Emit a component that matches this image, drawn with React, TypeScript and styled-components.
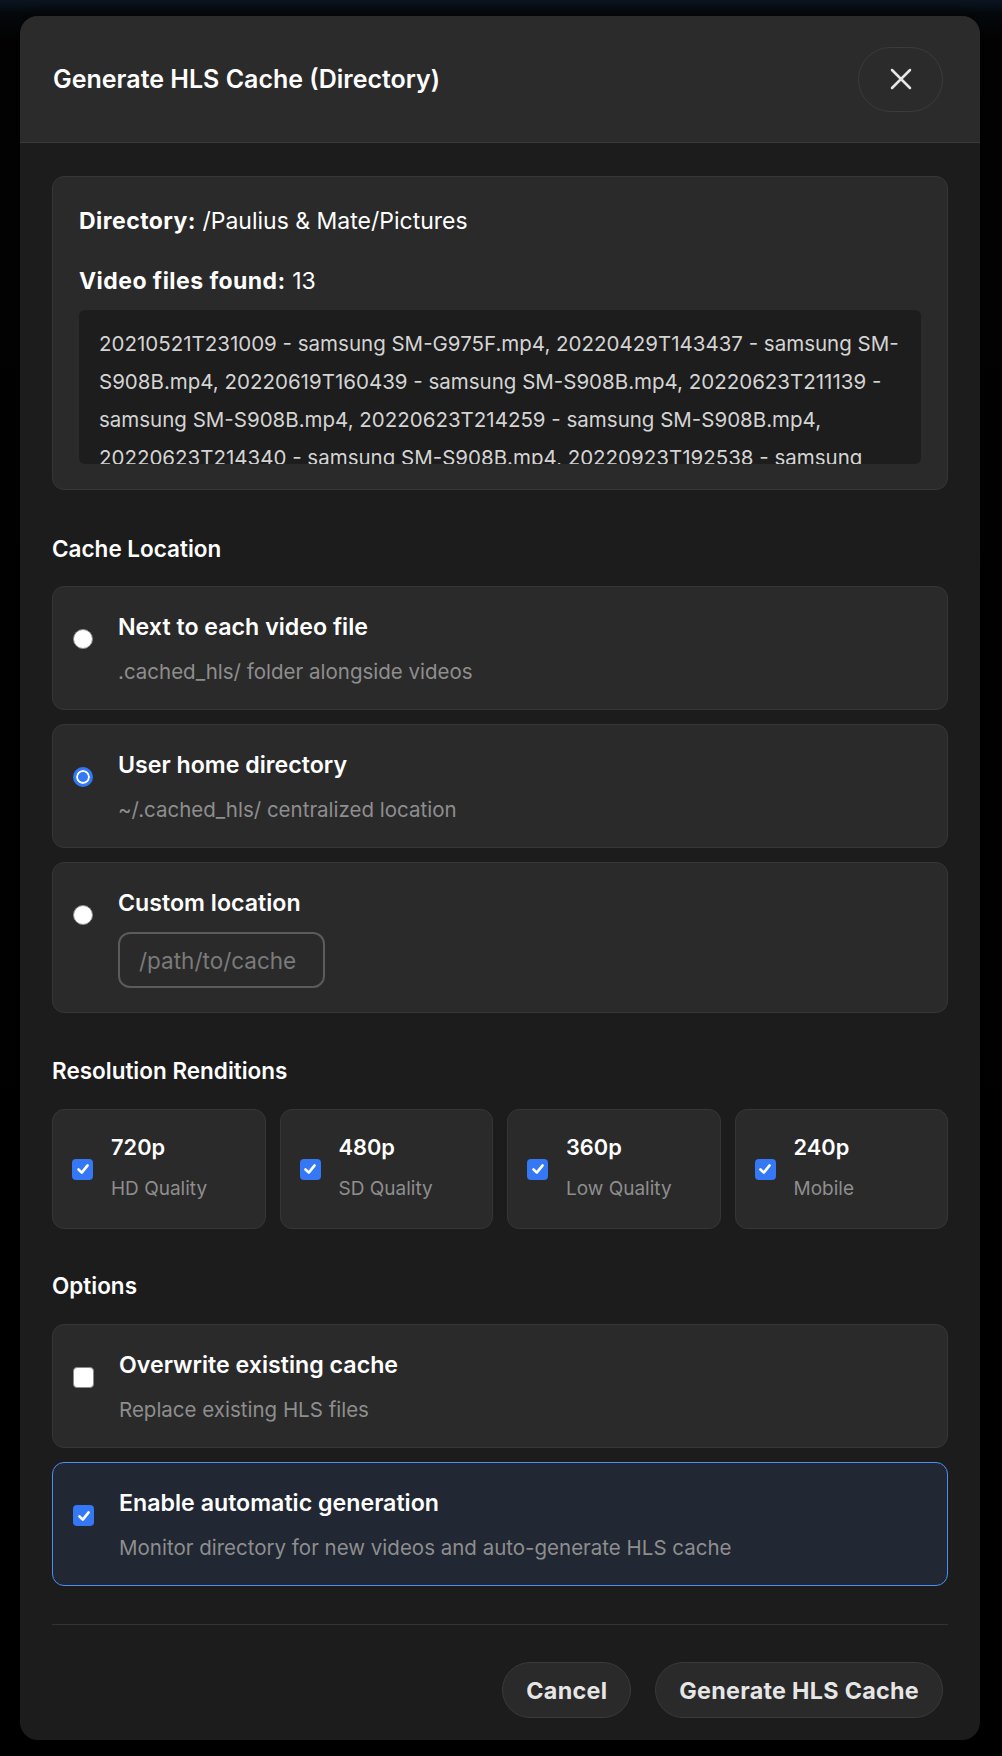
import React from "react";
import styled, { createGlobalStyle, css } from "styled-components";

const GlobalStyle = createGlobalStyle`
  html, body { margin: 0; padding: 0; }
  body {
    background: linear-gradient(180deg, #0c1622 0px, #05080c 14px, #030303 40px, #000 100%);
    font-family: Inter, "Noto Sans", "Liberation Sans", sans-serif;
    color: #fff;
    -webkit-font-smoothing: antialiased;
  }
  * { box-sizing: border-box; }
`;

const Page = styled.div`
  width: 1002px;
  min-height: 1756px;
  padding: 16px 22px 17px 20px;
`;

const Modal = styled.div`
  width: 960px;
  background: #1c1c1c;
  border-radius: 18px;
  overflow: hidden;
  box-shadow: 0 10px 40px rgba(0, 0, 0, 0.6);
`;

const Header = styled.div`
  height: 127px;
  display: flex;
  align-items: center;
  justify-content: space-between;
  padding: 0 37px 0 33px;
  background: #2b2b2b;
  border-bottom: 1px solid #3a3a3a;
`;

const Title = styled.h2`
  margin: 0;
  font-size: 25px;
  line-height: 30px;
  font-weight: 600;
  color: #fff;
`;

const CloseButton = styled.button`
  width: 85px;
  height: 65px;
  border-radius: 33px;
  border: 1px solid #3b3b3b;
  background: transparent;
  display: flex;
  align-items: center;
  justify-content: center;
  padding: 0;
  color: #e6e6e6;
`;

const Body = styled.div`
  padding: 33px 32px 0;
`;

const InfoCard = styled.div`
  background: #2a2a2a;
  border: 1px solid #363636;
  border-radius: 12px;
  padding: 29px 26px 25px;
`;

const InfoLine = styled.p<{ $gap?: number }>`
  margin: ${(p) => p.$gap ?? 0}px 0 0;
  font-size: 23px;
  line-height: 30px;
  color: #fff;
  b { font-weight: 700; letter-spacing: 0.45px; }
`;

const FileList = styled.div`
  margin-top: 14px;
  height: 154px;
  overflow: hidden;
  background: #1d1d1d;
  border-radius: 6px;
  padding: 15px 20px 0;
  font-size: 20.5px;
  line-height: 38px;
  color: #d4d4d4;
  white-space: nowrap;
`;

const SectionTitle = styled.h3<{ $top: number }>`
  margin: ${(p) => p.$top}px 0 0;
  font-size: 22.5px;
  line-height: 24px;
  font-weight: 600;
  color: #fff;
`;

const Stack = styled.div<{ $top: number }>`
  margin-top: ${(p) => p.$top}px;
  display: flex;
  flex-direction: column;
  gap: 14px;
`;

const OptionCard = styled.label<{ $active?: boolean }>`
  display: flex;
  align-items: flex-start;
  gap: 25px;
  padding: 25px 20px 24px;
  border-radius: 12px;
  background: #2a2a2a;
  border: 1px solid #363636;
  ${(p) =>
    p.$active &&
    css`
      background: #212733;
      border-color: #4b8ef5;
    `}
`;

const CardText = styled.div`
  display: flex;
  flex-direction: column;
  align-items: flex-start;
`;

const CardTitle = styled.div`
  font-size: 23.2px;
  line-height: 30px;
  font-weight: 600;
  color: #fff;
`;

const CardSub = styled.div`
  margin-top: 16px;
  font-size: 20.5px;
  line-height: 27px;
  color: #8e8e8e;
`;

const RadioDot = styled.span<{ $checked?: boolean }>`
  flex: none;
  width: 20px;
  height: 20px;
  margin-top: 17px;
  border-radius: 50%;
  background: #fff;
  border: 1px solid #8a8a8a;
  ${(p) =>
    p.$checked &&
    css`
      background: #3478f6;
      border: 3px solid #3478f6;
      box-shadow: inset 0 0 0 2px #fff;
    `}
`;

const Box = styled.span<{ $checked?: boolean; $mt?: number }>`
  flex: none;
  width: 21px;
  height: 21px;
  margin-top: ${(p) => p.$mt ?? 0}px;
  border-radius: 4px;
  display: flex;
  align-items: center;
  justify-content: center;
  background: ${(p) => (p.$checked ? "#3478f6" : "#fff")};
  border: ${(p) => (p.$checked ? "none" : "1px solid #8a8a8a")};
`;

const PathInput = styled.input`
  margin-top: 14px;
  width: 207px;
  height: 56px;
  border-radius: 12px;
  border: 2px solid #5b5b5b;
  background: transparent;
  padding: 0 19px;
  font-family: inherit;
  font-size: 22.5px;
  color: #fff;
  outline: none;
  &::placeholder { color: #7a7a7a; }
`;

const ResGrid = styled.div`
  margin-top: 26px;
  display: grid;
  grid-template-columns: repeat(4, 1fr);
  gap: 14px;
`;

const ResCard = styled.label`
  height: 120px;
  display: flex;
  align-items: center;
  gap: 18px;
  padding: 0 19px;
  border-radius: 12px;
  background: #2a2a2a;
  border: 1px solid #363636;
`;

const ResText = styled.div`
  display: flex;
  flex-direction: column;
  padding-bottom: 4px;
`;

const ResTitle = styled.div`
  font-size: 21.8px;
  line-height: 27px;
  font-weight: 600;
  color: #fff;
`;

const ResSub = styled.div`
  margin-top: 16px;
  font-size: 19px;
  line-height: 24px;
  color: #8e8e8e;
`;

const Footer = styled.div`
  margin-top: 38px;
  border-top: 1px solid #333;
  padding: 37px 5px 22px 0;
  display: flex;
  justify-content: flex-end;
  gap: 24px;
`;

const Button = styled.button`
  height: 56px;
  padding: 0 23px;
  border-radius: 28px;
  border: 1px solid #3a3a3a;
  background: #2a2a2a;
  color: #e6e6e6;
  font-family: inherit;
  font-size: 23.3px;
  font-weight: 700;
  letter-spacing: 0.3px;
`;

const Check = () => (
  <svg width="14" height="14" viewBox="0 0 14 14" fill="none">
    <path d="M2.5 7.5 L5.8 10.6 L11.6 3.4" stroke="#fff" strokeWidth="2.6" strokeLinecap="round" strokeLinejoin="round" />
  </svg>
);

const fileLines = [
  "20210521T231009 - samsung SM-G975F.mp4, 20220429T143437 - samsung SM-",
  "S908B.mp4, 20220619T160439 - samsung SM-S908B.mp4, 20220623T211139 -",
  "samsung SM-S908B.mp4, 20220623T214259 - samsung SM-S908B.mp4,",
  "20220623T214340 - samsung SM-S908B.mp4, 20220923T192538 - samsung",
  "SM-S908B.mp4, 20221015T101212 - samsung SM-S908B.mp4",
];

const renditions = [
  { r: "720p", d: "HD Quality" },
  { r: "480p", d: "SD Quality" },
  { r: "360p", d: "Low Quality" },
  { r: "240p", d: "Mobile" },
];

export default function App() {
  return (
    <>
      <GlobalStyle />
      <Page>
        <Modal>
          <Header>
            <Title>Generate HLS Cache (Directory)</Title>
            <CloseButton aria-label="Close">
              <svg width="22" height="22" viewBox="0 0 22 22" fill="none">
                <path d="M2 2 L20 20 M20 2 L2 20" stroke="#e6e6e6" strokeWidth="2.5" strokeLinecap="round" />
              </svg>
            </CloseButton>
          </Header>
          <Body>
            <InfoCard>
              <InfoLine>
                <b>Directory:</b> /Paulius &amp; Mate/Pictures
              </InfoLine>
              <InfoLine $gap={30}>
                <b>Video files found:</b> 13
              </InfoLine>
              <FileList>
                {fileLines.map((l, i) => (
                  <React.Fragment key={i}>
                    {l}
                    {i < fileLines.length - 1 && <br />}
                  </React.Fragment>
                ))}
              </FileList>
            </InfoCard>

            <SectionTitle $top={47}>Cache Location</SectionTitle>
            <Stack $top={25}>
              <OptionCard>
                <RadioDot />
                <CardText>
                  <CardTitle>Next to each video file</CardTitle>
                  <CardSub>.cached_hls/ folder alongside videos</CardSub>
                </CardText>
              </OptionCard>
              <OptionCard>
                <RadioDot $checked />
                <CardText>
                  <CardTitle>User home directory</CardTitle>
                  <CardSub>~/.cached_hls/ centralized location</CardSub>
                </CardText>
              </OptionCard>
              <OptionCard>
                <RadioDot />
                <CardText>
                  <CardTitle>Custom location</CardTitle>
                  <PathInput placeholder="/path/to/cache" />
                </CardText>
              </OptionCard>
            </Stack>

            <SectionTitle $top={46}>Resolution Renditions</SectionTitle>
            <ResGrid>
              {renditions.map((x) => (
                <ResCard key={x.r}>
                  <Box $checked>
                    <Check />
                  </Box>
                  <ResText>
                    <ResTitle>{x.r}</ResTitle>
                    <ResSub>{x.d}</ResSub>
                  </ResText>
                </ResCard>
              ))}
            </ResGrid>

            <SectionTitle $top={45}>Options</SectionTitle>
            <Stack $top={26}>
              <OptionCard>
                <Box $mt={17} />
                <CardText>
                  <CardTitle>Overwrite existing cache</CardTitle>
                  <CardSub>Replace existing HLS files</CardSub>
                </CardText>
              </OptionCard>
              <OptionCard $active>
                <Box $checked $mt={17}>
                  <Check />
                </Box>
                <CardText>
                  <CardTitle>Enable automatic generation</CardTitle>
                  <CardSub>Monitor directory for new videos and auto-generate HLS cache</CardSub>
                </CardText>
              </OptionCard>
            </Stack>

            <Footer>
              <Button>Cancel</Button>
              <Button>Generate HLS Cache</Button>
            </Footer>
          </Body>
        </Modal>
      </Page>
    </>
  );
}
